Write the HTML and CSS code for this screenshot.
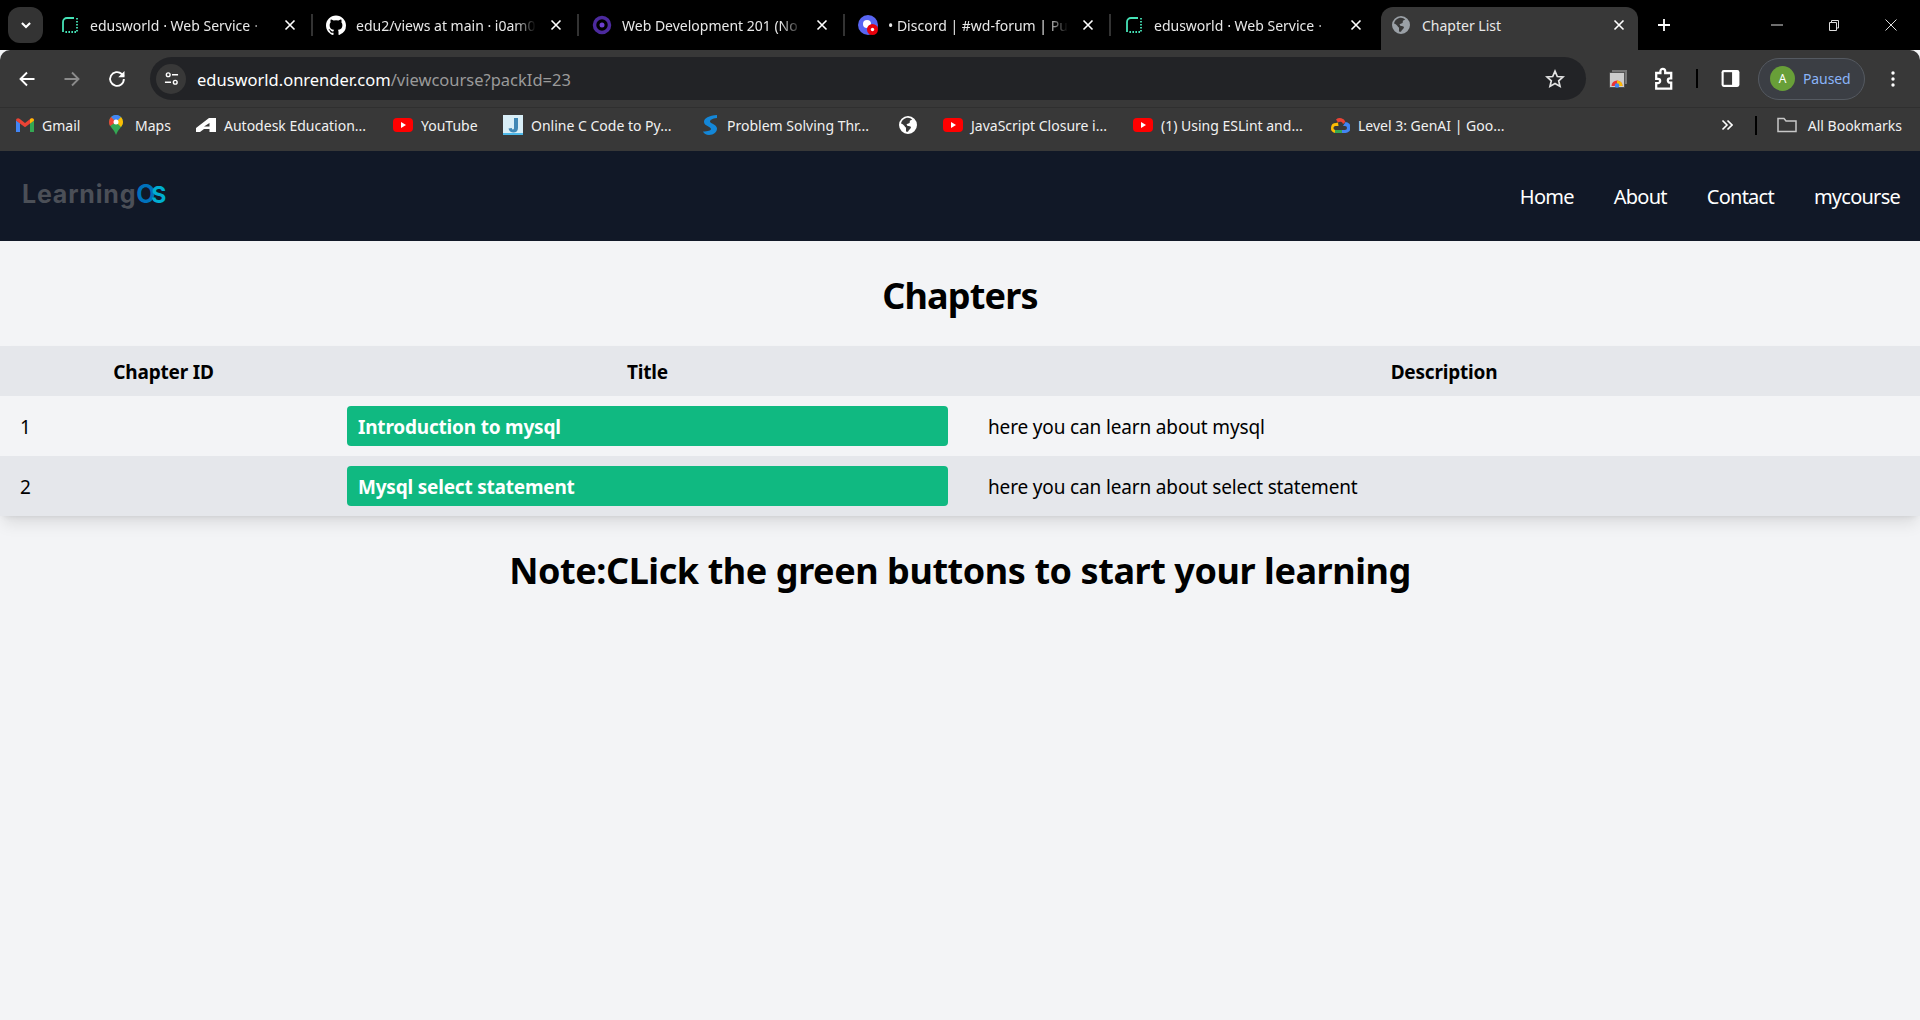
FILE: index.html
```html
<!DOCTYPE html>
<html lang="en">
<head>
  <meta charset="UTF-8">
  <title>Chapter List</title>
  <link rel="stylesheet" href="styles.css">
</head>
<body>

  <svg class="icon-defs" xmlns="http://www.w3.org/2000/svg">
    <symbol id="ic-render" viewBox="0 0 16 16">
      <path d="M1 15V5a4 4 0 0 1 4-4h7" fill="none" stroke="#46e3b7" stroke-width="1.8"/>
      <path d="M15 1v14H2" fill="none" stroke="#46e3b7" stroke-width="1.8" stroke-dasharray="1.6 1.4"/>
    </symbol>
    <symbol id="ic-close" viewBox="0 0 12 12">
      <path d="M1.5 1.5l9 9M10.5 1.5l-9 9" stroke="#fff" stroke-width="1.6" fill="none"/>
    </symbol>
    <symbol id="ic-globe" viewBox="0 0 18 18">
      <path fill-rule="evenodd" d="M9 0a9 9 0 1 1 0 18A9 9 0 0 1 9 0zM2 7.6c1.3.2 2 1 3 1.9.9.8 1 1.700 2 2.100v3.800c.6.2 1.300.4 2 .4.300-1.700 2.300-2.500 2.900-4.100.3-1-.9-1.800-2-1.800H8.600L7.500 8.300l3.100-1.200.3-2.400 2.300-1.300A7.300 7.300 0 0 0 9 1.700C5.500 1.700 2.600 4.200 2 7.600z"/>
    </symbol>
    <symbol id="ic-yt" viewBox="0 0 20 14">
      <rect width="20" height="14" rx="4" fill="#f00"/>
      <path d="M8 4l5 3-5 3z" fill="#fff"/>
    </symbol>
  </svg>

  <div class="tabstrip">
    <div class="tab-search">
      <svg viewBox="0 0 12 12"><path d="M2.500 4.300L6 7.800l3.500-3.500" fill="none" stroke="#fff" stroke-width="1.800"/></svg>
    </div>
    <div class="tab">
      <svg class="favicon"><use href="#ic-render"/></svg>
      <span class="tab-title">edusworld ⋅ Web Service ⋅</span>
      <svg class="tab-close"><use href="#ic-close"/></svg>
    </div>
    <div class="tab">
      <svg class="favicon favicon-big" viewBox="0 0 24 24"><path fill="#fff" d="M12 .5C5.370.5 0 5.870 0 12.500c0 5.300 3.440 9.800 8.200 11.390.6.110.82-.26.82-.58v-2.030c-3.340.73-4.040-1.610-4.040-1.610-.55-1.390-1.330-1.760-1.330-1.760-1.090-.74.08-.73.08-.73 1.200.08 1.840 1.240 1.840 1.240 1.070 1.830 2.810 1.300 3.500 1 .1-.78.42-1.300.76-1.600-2.670-.3-5.470-1.330-5.470-5.930 0-1.310.47-2.380 1.240-3.220-.13-.3-.54-1.520.12-3.180 0 0 1.010-.32 3.300 1.230a11.500 11.500 0 0 1 6 0c2.280-1.550 3.290-1.230 3.290-1.230.66 1.660.25 2.880.12 3.180.77.84 1.240 1.910 1.240 3.220 0 4.610-2.810 5.630-5.480 5.920.43.37.82 1.100.82 2.220v3.290c0 .32.22.7.83.58A12 12 0 0 0 24 12.500C24 5.870 18.630.5 12 .5z"/></svg>
      <span class="tab-title">edu2/views at main · i0am0</span>
      <svg class="tab-close"><use href="#ic-close"/></svg>
    </div>
    <div class="tab">
      <svg class="favicon favicon-big" viewBox="0 0 20 20"><circle cx="10" cy="10" r="7.500" fill="none" stroke="#4c2a9e" stroke-width="3.500"/><circle cx="10" cy="10" r="2.500" fill="#6d3fd0"/></svg>
      <span class="tab-title">Web Development 201 (No</span>
      <svg class="tab-close"><use href="#ic-close"/></svg>
    </div>
    <div class="tab">
      <svg class="favicon favicon-big" viewBox="0 0 20 20"><circle cx="10" cy="10" r="10" fill="#5865f2"/><circle cx="9" cy="9" r="4" fill="#fff"/><circle cx="14.500" cy="14.500" r="5.500" fill="#e8000b"/><circle cx="14.500" cy="14.500" r="1.700" fill="#fff"/></svg>
      <span class="tab-title">• Discord | #wd-forum | Pu</span>
      <svg class="tab-close"><use href="#ic-close"/></svg>
    </div>
    <div class="tab tab-last">
      <svg class="favicon"><use href="#ic-render"/></svg>
      <span class="tab-title">edusworld ⋅ Web Service ⋅</span>
      <svg class="tab-close"><use href="#ic-close"/></svg>
    </div>
    <div class="tab tab-active">
      <svg class="favicon favicon-gray"><use href="#ic-globe"/></svg>
      <span class="tab-title">Chapter List</span>
      <svg class="tab-close"><use href="#ic-close"/></svg>
    </div>
    <svg class="tab-new" viewBox="0 0 14 14"><path d="M7 1v12M1 7h12" stroke="#fff" stroke-width="1.800"/></svg>
    <div class="window-btns">
      <svg viewBox="0 0 12 12"><path d="M0 6h12" stroke="#ddd" stroke-width="1"/></svg>
      <svg viewBox="0 0 12 12"><path d="M1.500 3.500h7v8h-7zM3.500 3.500v-2h7v7.500h-2" fill="none" stroke="#ddd" stroke-width="1"/></svg>
      <svg viewBox="0 0 12 12"><path d="M.5.5l11 11M11.500.5l-11 11" stroke="#ddd" stroke-width="1"/></svg>
    </div>
  </div>

  <div class="toolbar">
    <svg class="tool-icon" viewBox="0 0 16 16"><path d="M14 8H3M8 2.800L2.800 8 8 13.200" fill="none" stroke="#fff" stroke-width="1.500"/></svg>
    <svg class="tool-icon" viewBox="0 0 16 16"><path d="M2 8h11M8 2.800L13.200 8 8 13.200" fill="none" stroke="#8b8b8b" stroke-width="1.500"/></svg>
    <svg class="tool-icon" viewBox="0 0 16 16"><path d="M13.500 8a5.500 5.500 0 1 1-1.700-4l1.700 1.500" fill="none" stroke="#fff" stroke-width="1.500"/><path d="M14 1.500v5h-5z" fill="#fff"/></svg>
    <div class="omnibox">
      <div class="site-info">
        <svg viewBox="0 0 16 16"><circle cx="4.500" cy="4" r="2" fill="none" stroke="#fff" stroke-width="1.500"/><path d="M8.500 4H15M1 12h6.500" stroke="#fff" stroke-width="1.500"/><circle cx="12" cy="12" r="2" fill="none" stroke="#fff" stroke-width="1.500"/></svg>
      </div>
      <span class="url"><span class="url-host">edusworld.onrender.com</span>/viewcourse?packId=23</span>
      <svg class="star" viewBox="0 0 20 20"><path d="M10 2.200l2.300 5.300 5.700.5-4.300 3.800 1.300 5.600L10 14.500l-5 2.900 1.300-5.600L2 8l5.700-.5z" fill="none" stroke="#e3e3e3" stroke-width="1.700"/></svg>
    </div>
    <div class="toolbar-right">
      <svg class="ext-cast" viewBox="0 0 20 20"><rect x="4" y="1" width="15" height="14" fill="#777"/><rect x="1.500" y="3.500" width="15" height="15" fill="#ccc" stroke="#444" stroke-width=".8"/><path d="M3.500 17a5.500 5.500 0 0 1 11 0z" fill="#e33"/><path d="M9 17v-5.500a5.500 5.500 0 0 1 5.500 5.500z" fill="#fbbc04"/><circle cx="9" cy="16.500" r="2.300" fill="#4285f4"/></svg>
      <svg class="ext-puzzle" viewBox="0 0 20 20"><path d="M7 3.500a2 2 0 0 1 4 0V5h5v4.500h-1a1.800 1.800 0 0 0 0 3.600h1V18H3.500v-4.500H5a1.800 1.800 0 0 0 0-3.600H3.500V5H7z" fill="none" stroke="#fff" stroke-width="1.900"/></svg>
      <span class="tool-sep"></span>
      <svg class="side-panel" viewBox="0 0 20 20"><rect x="1.500" y="2" width="17" height="16" rx="2" fill="#fff"/><rect x="3.500" y="4" width="8" height="12" fill="#383838"/></svg>
      <div class="profile">
        <span class="avatar">A</span>
        <span class="paused">Paused</span>
      </div>
      <svg class="dots" viewBox="0 0 4 16"><circle cx="2" cy="2" r="1.700"/><circle cx="2" cy="8" r="1.700"/><circle cx="2" cy="14" r="1.700"/></svg>
    </div>
  </div>

  <div class="bookmarks">
    <div class="bookmark">
      <svg viewBox="0 0 18 14"><path d="M0 2.500V14h4V5z" fill="#4285f4"/><path d="M14 14h4V2.500L14 5z" fill="#34a853"/><path d="M0 2.500C0 .6 2 -.4 3.500.8L9 5l5.500-4.200C16-.4 18 .6 18 2.500L14 5.500 9 9.300 4 5.500z" fill="#ea4335"/><path d="M14 1.200l.5-.4C16-.4 18 .6 18 2.500L14 5.500z" fill="#fbbc04"/></svg>
      <span>Gmail</span>
    </div>
    <div class="bookmark">
      <svg viewBox="0 0 14 20"><path d="M7 0a7 7 0 0 1 7 7c0 4.500-5 7-7 13C5 14 0 11.500 0 7a7 7 0 0 1 7-7z" fill="#34a853"/><path d="M2 2l10 10c1.200-1.500 2-3.100 2-5a7 7 0 0 0-2-5z" fill="#fbbc04"/><path d="M2 2a7 7 0 0 1 10 0L7 7z" fill="#4285f4"/><path d="M2 2L7 7 1 11C.3 9.800 0 8.500 0 7a7 7 0 0 1 2-5z" fill="#ea4335"/><circle cx="7" cy="7" r="2.500" fill="#fff"/></svg>
      <span>Maps</span>
    </div>
    <div class="bookmark">
      <svg viewBox="0 0 20 14"><path d="M0 14V10L13 0h7v14h-6.500v-3H8l-4 3z" fill="#fff"/><path d="M8 8.500h5.500V5z" fill="#383838"/></svg>
      <span>Autodesk Education...</span>
    </div>
    <div class="bookmark">
      <svg><use href="#ic-yt"/></svg>
      <span>YouTube</span>
    </div>
    <div class="bookmark">
      <svg viewBox="0 0 20 20"><rect width="20" height="20" fill="#d8eef7"/><rect y="18" width="20" height="2" fill="#4db8e8"/><path d="M11 3h4v10c0 3-2 4.500-4.500 4.500S6 16 5.500 13.500l3.300-.6c.2 1 .8 1.500 1.300 1.500.6 0 .9-.5.9-1.400z" fill="#3f87b5"/></svg>
      <span>Online C Code to Py...</span>
    </div>
    <div class="bookmark">
      <svg viewBox="0 0 14 20"><path d="M14 0C6 .5 1 3 1 7c0 4 7 4.500 7 7 0 1.500-3 2.500-8 2.500 1 2 3 3.500 6 3.500 5 0 8-3 8-6.500 0-4-7-5-7-7 0-1.500 2-3 7-3.500z" fill="#1487d8"/></svg>
      <span>Problem Solving Thr...</span>
    </div>
    <div class="bookmark">
      <svg class="globe-white" viewBox="0 0 18 18"><use href="#ic-globe"/></svg>
    </div>
    <div class="bookmark">
      <svg><use href="#ic-yt"/></svg>
      <span>JavaScript Closure i...</span>
    </div>
    <div class="bookmark">
      <svg><use href="#ic-yt"/></svg>
      <span>(1) Using ESLint and...</span>
    </div>
    <div class="bookmark">
      <svg viewBox="0 0 20 16"><path d="M6 2.500A6 6 0 0 1 15.500 5l-2.500 2A3 3 0 0 0 8 5.500z" fill="#ea4335"/><path d="M15.500 5A5 5 0 0 1 15 16h-3v-3h3a2 2 0 0 0 0-4h-2z" fill="#4285f4"/><path d="M12 16H5v-3h7z" fill="#34a853"/><path d="M5 16A5 5 0 0 1 6 6.100l2-.6L8.500 9 6 9A2 2 0 0 0 5 13z" fill="#fbbc04"/></svg>
      <span>Level 3: GenAI | Goo...</span>
    </div>
    <div class="bookmarks-end">
      <svg class="more" viewBox="0 0 12 12"><path d="M1.500 1.500L6 6l-4.500 4.500M6.500 1.500L11 6l-4.500 4.500" fill="none" stroke="#fff" stroke-width="1.600"/></svg>
      <span class="tool-sep"></span>
      <svg class="folder" viewBox="0 0 20 16"><path d="M1 14.500V1.500h6l2 2.500h10v10.500z" fill="none" stroke="#c7c7c7" stroke-width="1.500"/></svg>
      <span>All Bookmarks</span>
    </div>
  </div>

  <nav class="navbar">
    <div class="logo">Learning<span class="logo-o">O</span><span class="logo-s">S</span></div>
    <ul class="nav-links">
      <li><a href="#">Home</a></li>
      <li><a href="#">About</a></li>
      <li><a href="#">Contact</a></li>
      <li><a href="#">mycourse</a></li>
    </ul>
  </nav>

  <h1 class="page-title">Chapters</h1>

  <table class="chapter-table">
    <colgroup>
      <col class="col-id">
      <col class="col-title">
      <col>
    </colgroup>
    <thead>
      <tr>
        <th>Chapter ID</th>
        <th>Title</th>
        <th>Description</th>
      </tr>
    </thead>
    <tbody>
      <tr>
        <td class="cell-text">1</td>
        <td><a href="#" class="chapter-btn">Introduction to mysql</a></td>
        <td class="cell-text">here you can learn about mysql</td>
      </tr>
      <tr>
        <td class="cell-text">2</td>
        <td><a href="#" class="chapter-btn">Mysql select statement</a></td>
        <td class="cell-text">here you can learn about select statement</td>
      </tr>
    </tbody>
  </table>

  <h2 class="note">Note:CLick the green buttons to start your learning</h2>

</body>
</html>
```

FILE: styles.css
```css
* {
  box-sizing: border-box;
}

body {
  margin: 0;
  height: 1020px;
  overflow: hidden;
  background-color: #f3f4f6;
  color: #000;
  font-family: "Noto Sans", Arial, sans-serif;
}

.icon-defs {
  display: none;
}

/* browser chrome */
.tabstrip {
  display: flex;
  align-items: center;
  height: 50px;
  background: #000;
  padding-left: 8px;
  color: #e8e8e8;
  font-size: 14px;
}

.tab-search {
  display: flex;
  align-items: center;
  justify-content: center;
  width: 35px;
  height: 36px;
  margin-right: 4px;
  background: #333;
  border-radius: 12px;
  flex-shrink: 0;
}

.tab-search svg {
  width: 14px;
  height: 14px;
}

.tab {
  display: flex;
  align-items: center;
  flex-shrink: 0;
  width: 266px;
  height: 22px;
  padding: 0 12px 0 15px;
  border-right: 2px solid #333;
}

.tab-last {
  border-right: none;
}

.favicon {
  width: 16px;
  height: 16px;
  margin-right: 12px;
  flex-shrink: 0;
}

.favicon-big {
  width: 20px;
  height: 20px;
  margin-left: -2px;
  margin-right: 10px;
}

.favicon-gray {
  width: 18px;
  height: 18px;
  fill: #9aa0a6;
}

.tab-title {
  flex: 1;
  white-space: nowrap;
  overflow: hidden;
  -webkit-mask-image: linear-gradient(to right, #000 88%, transparent 100%);
  mask-image: linear-gradient(to right, #000 88%, transparent 100%);
}

.tab-close {
  width: 12px;
  height: 12px;
  margin: 0 3px 0 14px;
  flex-shrink: 0;
}

.tab-active {
  align-self: flex-end;
  width: 257px;
  height: 43px;
  margin-left: 4px;
  padding: 0 13px 7px 11px;
  background: #383838;
  border-radius: 12px 12px 0 0;
  border: none;
}

.tab-active .tab-title {
  -webkit-mask-image: none;
  mask-image: none;
}

.tab-active .tab-close {
  margin-right: 0;
}

.tab-new {
  width: 14px;
  height: 14px;
  margin-left: 19px;
}

.window-btns {
  display: flex;
  align-items: center;
  gap: 45px;
  margin-left: auto;
  padding-right: 23px;
}

.window-btns svg {
  width: 12px;
  height: 12px;
}

.toolbar {
  display: flex;
  align-items: center;
  height: 58px;
  padding: 0 0 0 17px;
  background: #383838;
  border-bottom: 1px solid #2f2f2f;
  border-radius: 10px 10px 0 0;
}

.tool-icon {
  width: 20px;
  height: 20px;
  margin-right: 25px;
  flex-shrink: 0;
}

.omnibox {
  display: flex;
  align-items: center;
  width: 1436px;
  height: 43px;
  margin: 0 0 0 -2px;
  padding: 0 21px 0 6px;
  background: #222326;
  border-radius: 22px;
}

.site-info {
  display: flex;
  align-items: center;
  justify-content: center;
  width: 30px;
  height: 30px;
  border-radius: 50%;
  background: #383838;
}

.site-info svg {
  width: 15px;
  height: 15px;
}

.url {
  margin-left: 11px;
  padding-top: 1px;
  font-size: 16.5px;
  color: #9a9a9a;
}

.url-host {
  color: #fff;
}

.star {
  width: 20px;
  height: 20px;
  margin-left: auto;
}

.toolbar-right {
  display: flex;
  align-items: center;
  flex: 1;
}

.ext-cast {
  width: 20px;
  height: 20px;
  margin-left: 22px;
}

.ext-puzzle {
  width: 24px;
  height: 24px;
  margin-left: 24px;
}

.tool-sep {
  width: 2px;
  height: 19px;
  background: #000;
}

.toolbar-right .tool-sep {
  margin-left: 20px;
}

.side-panel {
  width: 21px;
  height: 21px;
  margin-left: 22px;
}

.profile {
  display: flex;
  align-items: center;
  width: 107px;
  height: 42px;
  margin-left: 17px;
  padding-left: 11px;
  border: 1px solid #555a61;
  border-radius: 21px;
  background: #3b3e44;
}

.avatar {
  display: flex;
  align-items: center;
  justify-content: center;
  width: 25px;
  height: 25px;
  border-radius: 50%;
  background: #689f38;
  color: #fff;
  font-size: 12px;
}

.paused {
  margin-left: 8px;
  color: #8ab4f8;
  font-size: 14px;
  letter-spacing: -0.1px;
}

.dots {
  width: 4px;
  height: 16px;
  margin-left: 26px;
  fill: #fff;
}

.bookmarks {
  display: grid;
  grid-template-columns: 90px 90px 197px 110px 200px 194px 46px 190px 197px 370px 1fr;
  align-items: center;
  height: 43px;
  padding: 0 18px 9px 16px;
  background: #383838;
  color: #f1f1f1;
  font-size: 14px;
}

.bookmark {
  display: flex;
  align-items: center;
  gap: 8px;
  white-space: nowrap;
}

.bookmark svg {
  width: 20px;
  height: 14px;
  flex-shrink: 0;
}

.bookmark:nth-child(1) svg {
  width: 18px;
}

.bookmark:nth-child(2) svg {
  width: 14px;
  height: 20px;
  margin: 0 4px 0 3px;
}

.bookmark:nth-child(5) svg {
  height: 20px;
}

.bookmark:nth-child(6) svg {
  width: 14px;
  height: 20px;
  margin-right: 2px;
}

.bookmark:nth-child(7) svg {
  width: 18px;
  height: 18px;
  margin-left: 2px;
  fill: #fff;
}

.bookmark:nth-child(10) svg {
  height: 16px;
}

.bookmarks-end {
  display: flex;
  align-items: center;
  grid-column: 11;
  justify-content: flex-end;
  white-space: nowrap;
}

.more {
  width: 12px;
  height: 12px;
  margin-right: 22px;
}

.folder {
  width: 20px;
  height: 16px;
  margin: 0 11px 0 20px;
}

/* page */
.navbar {
  display: flex;
  justify-content: space-between;
  align-items: center;
  height: 90px;
  padding: 0 20px 0 22px;
  background-color: #111827;
  color: #fff;
}

.logo {
  margin-top: -4px;
  font-family: Inter, Arial, sans-serif;
  font-size: 25px;
  font-weight: 700;
  letter-spacing: 0.8px;
  color: #4b4f57;
}

.logo-o {
  color: #0072bc;
}

.logo-s {
  margin-left: -5px;
  color: #00aed1;
  font-size: 23px;
}

.nav-links {
  display: flex;
  gap: 40px;
  margin: 0;
  padding: 0;
  list-style: none;
  font-size: 20px;
  letter-spacing: -0.75px;
}

.nav-links a {
  color: #fff;
  text-decoration: none;
}

.page-title {
  margin: 0;
  padding-top: 31px;
  height: 105px;
  text-align: center;
  font-size: 36px;
  line-height: 48px;
  font-weight: 700;
  letter-spacing: -0.8px;
}

.chapter-table {
  width: 100%;
  table-layout: fixed;
  border-collapse: collapse;
  font-size: 19px;
  letter-spacing: -0.15px;
  box-shadow: 0 10px 15px -3px rgba(0, 0, 0, 0.1), 0 4px 6px -4px rgba(0, 0, 0, 0.1);
}

.col-id {
  width: 327px;
}

.col-title {
  width: 641px;
}

.chapter-table th {
  height: 50px;
  padding: 2px 20px 0;
  background: #e5e7eb;
  font-weight: 700;
  letter-spacing: -0.2px;
}

.chapter-table td {
  padding: 10px 20px;
  height: 60px;
  text-align: left;
}

.chapter-table td.cell-text {
  padding: 12px 20px 10px;
}

.chapter-table tbody tr:nth-child(even) {
  background: #e5e7eb;
}

.chapter-btn {
  display: block;
  height: 40px;
  padding: 0 11px;
  background: #10b981;
  border-radius: 4px;
  color: #fff;
  font-weight: 700;
  letter-spacing: -0.2px;
  line-height: 42px;
  text-decoration: none;
}

.note {
  margin: 0;
  padding-top: 30px;
  text-align: center;
  font-size: 36px;
  line-height: 50px;
  font-weight: 700;
  letter-spacing: -0.43px;
}
```
